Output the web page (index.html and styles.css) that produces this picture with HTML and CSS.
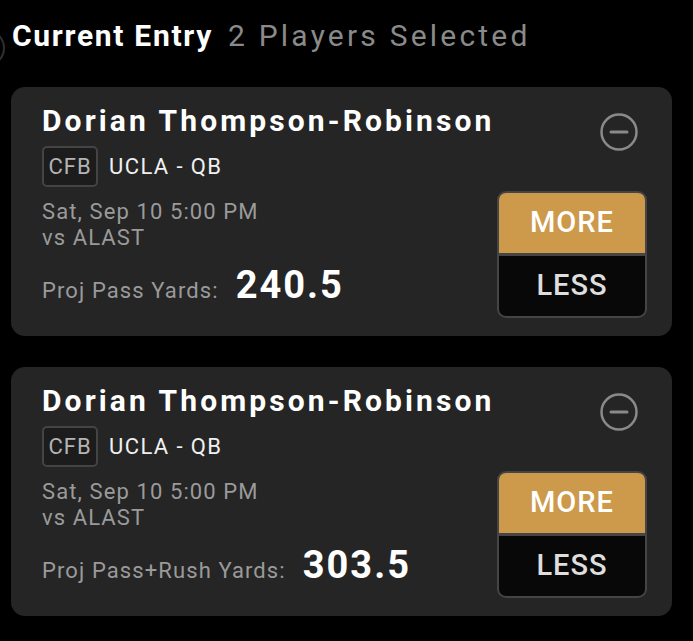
FILE: index.html
```html
<!DOCTYPE html>
<html lang="en">

<head>
  <meta charset="UTF-8">
  <meta name="viewport" content="width=device-width, initial-scale=1.0">
  <title>Current Entry</title>
  <link rel="stylesheet" href="styles.css">
</head>

<body>
  <div class="header">
    <div class="back-circle"></div>
    <h1>Current Entry</h1>
    <span class="count">2 Players Selected</span>
  </div>

  <div class="entry-list">
    <div class="card">
      <div class="info">
        <h2 class="name">Dorian Thompson-Robinson</h2>
        <div class="team-row">
          <span class="league">CFB</span>
          <span class="team">UCLA - QB</span>
        </div>
        <div class="game">Sat, Sep 10 5:00 PM<br>vs ALAST</div>
        <div class="proj">
          <span class="proj-label">Proj Pass Yards:</span>
          <span class="proj-value">240.5</span>
        </div>
      </div>
      <div class="actions">
        <svg class="remove" width="40" height="40" viewBox="0 0 40 40">
          <circle cx="20" cy="20" r="17.5" fill="none" stroke="#8a8a8a" stroke-width="2.5" />
          <line x1="12" y1="20" x2="28" y2="20" stroke="#8a8a8a" stroke-width="3" stroke-linecap="round" />
        </svg>
        <div class="pick">
          <button class="more">MORE</button>
          <button class="less">LESS</button>
        </div>
      </div>
    </div>

    <div class="card">
      <div class="info">
        <h2 class="name">Dorian Thompson-Robinson</h2>
        <div class="team-row">
          <span class="league">CFB</span>
          <span class="team">UCLA - QB</span>
        </div>
        <div class="game">Sat, Sep 10 5:00 PM<br>vs ALAST</div>
        <div class="proj">
          <span class="proj-label">Proj Pass+Rush Yards:</span>
          <span class="proj-value">303.5</span>
        </div>
      </div>
      <div class="actions">
        <svg class="remove" width="40" height="40" viewBox="0 0 40 40">
          <circle cx="20" cy="20" r="17.5" fill="none" stroke="#8a8a8a" stroke-width="2.5" />
          <line x1="12" y1="20" x2="28" y2="20" stroke="#8a8a8a" stroke-width="3" stroke-linecap="round" />
        </svg>
        <div class="pick">
          <button class="more">MORE</button>
          <button class="less">LESS</button>
        </div>
      </div>
    </div>
  </div>
</body>

</html>
```

FILE: styles.css
```css
/* CSS styles */

body {
  font-family: Roboto, "Liberation Sans", sans-serif;
  margin: 0;
  background-color: #000;
  color: #fff;
  overflow: hidden;
}

.header {
  display: flex;
  align-items: center;
  height: 70px;
  padding-left: 12px;
}

.back-circle {
  width: 34px;
  height: 34px;
  border: 2px solid #2e2e2e;
  border-radius: 50%;
  margin-left: -45px;
  margin-right: 7px;
  margin-top: 26px;
}

.header h1 {
  margin: 0;
  font-size: 30px;
  font-weight: 700;
  letter-spacing: 1.7px;
}

.count {
  margin-left: 15px;
  font-size: 30px;
  color: #8a8a8a;
  letter-spacing: 3.2px;
}

.entry-list {
  display: flex;
  flex-direction: column;
  gap: 31px;
  padding: 17px 21px 0 11px;
}

.card {
  display: flex;
  justify-content: space-between;
  background-color: #252525;
  border-radius: 14px;
  height: 249px;
  box-sizing: border-box;
  padding: 14px 25px 18px 31px;
}

.name {
  margin: 0;
  font-size: 30px;
  font-weight: 700;
  letter-spacing: 3.1px;
  line-height: 40px;
}

.team-row {
  display: flex;
  align-items: center;
  gap: 11px;
  margin-top: 5px;
}

.league {
  box-sizing: border-box;
  width: 56px;
  height: 41px;
  border: 2px solid #444;
  border-radius: 5px;
  background-color: #1c1c1c;
  color: #b4b4b4;
  font-size: 22px;
  letter-spacing: 1px;
  display: flex;
  align-items: center;
  justify-content: center;
}

.team {
  font-size: 22px;
  color: #f0f0f0;
  letter-spacing: 1.4px;
}

.game {
  margin-top: 12px;
  font-size: 22px;
  line-height: 26px;
  color: #9a9a9a;
  letter-spacing: 1.1px;
}

.proj {
  display: flex;
  align-items: baseline;
  gap: 17px;
  margin-top: 12px;
}

.proj-label {
  font-size: 22px;
  color: #9a9a9a;
  letter-spacing: 1.1px;
}

.proj-value {
  font-size: 38px;
  font-weight: 700;
  letter-spacing: 2px;
}

.actions {
  display: flex;
  flex-direction: column;
  align-items: flex-end;
  justify-content: space-between;
}

.remove {
  margin-top: 11px;
  margin-right: 8px;
}

.pick {
  display: flex;
  flex-direction: column;
  width: 150px;
  height: 127px;
  box-sizing: border-box;
  border: 2px solid #454545;
  border-radius: 9px;
  overflow: hidden;
  background-color: #454545;
  gap: 3px;
}

.pick button {
  flex: 1;
  border: none;
  padding-bottom: 3px;
  font-family: Roboto, "Liberation Sans", sans-serif;
  font-size: 29px;
  font-weight: 500;
  letter-spacing: 1px;
  cursor: pointer;
}

.more {
  background-color: #cd994a;
  color: #fff;
}

.less {
  background-color: #080808;
  color: #dedede;
}
```
